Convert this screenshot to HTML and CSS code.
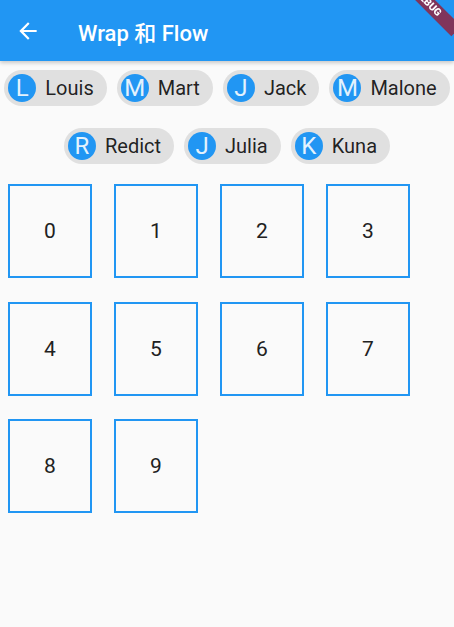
FILE: index.html
```html
<!DOCTYPE html>
<html>
<head>
<meta charset="utf-8">
<link rel="stylesheet" href="styles.css">
</head>
<body>
<header class="appbar">
  <svg class="back" width="26" height="26" viewBox="0 0 24 24"><path d="M20 11H7.83l5.59-5.59L12 4l-8 8 8 8 1.41-1.41L7.83 13H20v-2z" fill="#fff"/></svg>
  <h1 class="title">Wrap 和 Flow</h1>
</header>
<main>
  <div class="chips">
    <div class="chip"><span class="avatar">L</span><span class="label">Louis</span></div>
    <div class="chip"><span class="avatar">M</span><span class="label">Mart</span></div>
    <div class="chip"><span class="avatar">J</span><span class="label">Jack</span></div>
    <div class="chip"><span class="avatar">M</span><span class="label">Malone</span></div>
    <div class="chip"><span class="avatar">R</span><span class="label">Redict</span></div>
    <div class="chip"><span class="avatar">J</span><span class="label">Julia</span></div>
    <div class="chip"><span class="avatar">K</span><span class="label">Kuna</span></div>
  </div>
  <div class="grid">
    <div class="box">0</div>
    <div class="box">1</div>
    <div class="box">2</div>
    <div class="box">3</div>
    <div class="box">4</div>
    <div class="box">5</div>
    <div class="box">6</div>
    <div class="box">7</div>
    <div class="box">8</div>
    <div class="box">9</div>
  </div>
</main>
<div class="banner-clip"><div class="banner">DEBUG</div></div>
</body>
</html>
```
FILE: styles.css
```css
html, body {
  margin: 0;
  padding: 0;
  background: #fafafa;
  font-family: Roboto, "Noto Sans CJK SC", sans-serif;
}
.appbar {
  position: relative;
  z-index: 1;
  height: 61px;
  background: #2196F3;
  display: flex;
  align-items: center;
  box-shadow: 0 2px 4px rgba(0,0,0,0.2);
}
.back {
  margin-left: 15px;
  flex: none;
}
.title {
  margin: 0 0 0 37px;
  font-size: 22px;
  font-weight: 500;
  color: #fff;
}
.chips {
  display: flex;
  flex-wrap: wrap;
  justify-content: center;
  gap: 22px 10px;
  padding-top: 9px;
}
.chip {
  display: flex;
  align-items: center;
  height: 36px;
  box-sizing: border-box;
  border-radius: 18px;
  background: #e0e0e0;
  padding: 4px 13px 4px 4px;
}
.avatar {
  width: 28px;
  height: 28px;
  border-radius: 50%;
  background: #2196F3;
  color: #e3f2fd;
  font-size: 24px;
  display: flex;
  align-items: center;
  justify-content: center;
  margin-right: 9px;
}
.label {
  font-size: 20px;
  color: rgba(0,0,0,0.87);
}
.grid {
  display: grid;
  grid-template-columns: repeat(4, 84px);
  grid-auto-rows: 94px;
  column-gap: 22px;
  row-gap: 23.5px;
  padding: 20px 8px;
}
.box {
  border: 2px solid #2196F3;
  box-sizing: border-box;
  display: flex;
  align-items: center;
  justify-content: center;
  font-size: 21px;
  color: #212121;
}
.banner-clip {
  position: fixed;
  left: 0;
  top: 0;
  right: 0;
  bottom: 0;
  overflow: hidden;
  pointer-events: none;
  z-index: 10;
}
.banner {
  position: absolute;
  left: 388px;
  top: -4px;
  width: 80px;
  height: 14px;
  transform: rotate(45deg);
  background: rgba(160,20,40,0.75);
  color: #fff;
  font-size: 10.2px;
  font-weight: 900;
  line-height: 14px;
  text-align: center;
}
```
